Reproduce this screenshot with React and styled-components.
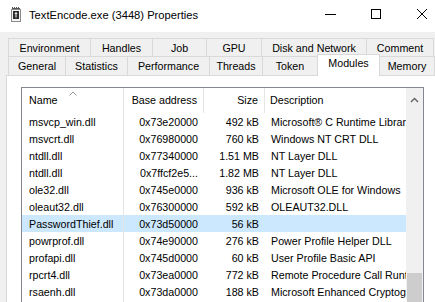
import React from 'react';
import styled, { createGlobalStyle } from 'styled-components';

const GlobalStyle = createGlobalStyle`
  html, body {
    margin: 0;
    padding: 0;
    background: #f0f0f0;
  }
  body {
    font-family: "Liberation Sans", Arial, sans-serif;
    font-size: 10.7px;
    color: #000;
  }
`;

const Window = styled.div`
  width: 435px;
  height: 302px;
  overflow: hidden;
  display: flex;
  flex-direction: column;
  background: #f0f0f0;
`;

const TitleBar = styled.div`
  height: 32px;
  flex-shrink: 0;
  background: #fff;
  display: flex;
  align-items: center;
  overflow: hidden;
`;

const AppIcon = styled.svg`
  width: 10px;
  height: 15px;
  margin: -4px 8px 0 11px;
  flex-shrink: 0;
`;

const Title = styled.div`
  flex: 1;
  font-size: 11.2px;
  white-space: nowrap;
  margin-top: -3px;
`;

const Controls = styled.div`
  display: flex;
  flex-shrink: 0;
  margin-right: -10px;
  margin-top: -4px;
`;

const CaptionButton = styled.div`
  width: 46px;
  height: 28px;
  display: flex;
  align-items: center;
  justify-content: center;
`;

const Body = styled.div`
  flex: 1;
  display: flex;
  flex-direction: column;
  padding: 6px 0 0 6px;
  min-height: 0;
`;

const TabRow = styled.div`
  display: flex;
  margin-left: 2px;
  height: ${p => p.$h}px;
`;

const Tab = styled.div`
  box-sizing: border-box;
  width: ${p => p.$w}px;
  height: ${p => (p.$active ? p.$h + 3 : p.$h)}px;
  margin-top: ${p => (p.$active ? -2 : 0)}px;
  margin-right: -1px;
  border: 1px solid #d9d9d9;
  border-bottom: none;
  background: ${p => (p.$active ? '#fff' : '#f0f0f0')};
  position: relative;
  z-index: ${p => (p.$active ? 2 : 1)};
  display: flex;
  align-items: ${p => (p.$active ? 'flex-start' : 'center')};
  padding-top: ${p => (p.$active ? 2 : 0)}px;
  justify-content: center;
  white-space: nowrap;
`;

const Panel = styled.div`
  flex: 1;
  min-height: 0;
  background: #fff;
  border: 1px solid #d9d9d9;
  border-right: none;
  border-bottom: none;
  padding: 11px 0 0 14px;
`;

const ListBox = styled.div`
  width: 403px;
  height: 240px;
  box-sizing: border-box;
  border: 1px solid #828790;
  display: flex;
  background: #fff;
`;

const ListContent = styled.div`
  flex: 1;
  overflow: hidden;
  display: flex;
  flex-direction: column;
`;

const Grid = styled.div`
  display: grid;
  grid-template-columns: 102px 80px 61px 300px;
  height: ${p => p.$h}px;
  background: ${p => (p.$selected ? '#cce8ff' : 'transparent')};
  white-space: nowrap;
`;

const Cell = styled.div`
  box-sizing: border-box;
  display: flex;
  align-items: center;
  overflow: hidden;
  justify-content: ${p => (p.$right ? 'flex-end' : 'flex-start')};
  padding: ${p => (p.$right ? '0 6px 0 0' : `0 0 0 ${p.$pl || 6}px`)};
  border-right: ${p => (p.$line ? '1px solid #e5e5e5' : 'none')};
`;

const HeadCell = styled(Cell)`
  position: relative;
  padding-bottom: 1px;
`;

const SortArrow = styled.svg`
  position: absolute;
  top: 3px;
  left: 47px;
  width: 8px;
  height: 5px;
`;

const ScrollBar = styled.div`
  width: 17px;
  flex-shrink: 0;
  background: #f0f0f0;
  display: flex;
  flex-direction: column;
  align-items: center;
`;

const ScrollArrow = styled.div`
  height: 17px;
  width: 17px;
  display: flex;
  align-items: center;
  justify-content: center;
  margin-top: 3px;
`;

const Track = styled.div`
  flex: 1;
`;

const Thumb = styled.div`
  width: 15px;
  height: 53px;
  background: #cdcdcd;
`;

const row1 = [
  ['Environment', 83],
  ['Handles', 63],
  ['Job', 55],
  ['GPU', 56],
  ['Disk and Network', 106],
  ['Comment', 68],
];

const row2 = [
  ['General', 58],
  ['Statistics', 63],
  ['Performance', 83],
  ['Threads', 54],
  ['Token', 56],
  ['Modules', 63, true],
  ['Memory', 56],
];

const modules = [
  ['msvcp_win.dll', '0x73e20000', '492 kB', 'Microsoft® C Runtime Library'],
  ['msvcrt.dll', '0x76980000', '760 kB', 'Windows NT CRT DLL'],
  ['ntdll.dll', '0x77340000', '1.51 MB', 'NT Layer DLL'],
  ['ntdll.dll', '0x7ffcf2e5...', '1.82 MB', 'NT Layer DLL'],
  ['ole32.dll', '0x745e0000', '936 kB', 'Microsoft OLE for Windows'],
  ['oleaut32.dll', '0x76300000', '592 kB', 'OLEAUT32.DLL'],
  ['PasswordThief.dll', '0x73d50000', '56 kB', '', true],
  ['powrprof.dll', '0x74e90000', '276 kB', 'Power Profile Helper DLL'],
  ['profapi.dll', '0x745d0000', '60 kB', 'User Profile Basic API'],
  ['rpcrt4.dll', '0x73ea0000', '772 kB', 'Remote Procedure Call Runtime'],
  ['rsaenh.dll', '0x73da0000', '188 kB', 'Microsoft Enhanced Cryptographic Provider'],
  ['sechost.dll', '0x76e00000', '500 kB', 'Host for SCM/SDDL/LSA Lookup APIs'],
];

const App = () => {
  return (
    <Window>
      <GlobalStyle />
      <TitleBar>
        <AppIcon viewBox="0 0 10 15">
          <path d="M1 0.5h1M3 0.5h1M5 0.5h1M7 0.5h1M1 1.5h8" stroke="#555" strokeWidth="1" />
          <rect x="0.5" y="2.5" width="9" height="12" fill="#f4f4f4" stroke="#8a8a8a" />
          <rect x="2.5" y="4.5" width="5" height="7" fill="#2b2b2b" stroke="#2b2b2b" />
          <path d="M5 5.5v5M3.8 7l1.2-1.3L6.2 7" stroke="#fff" strokeWidth="1" fill="none" />
        </AppIcon>
        <Title>TextEncode.exe (3448) Properties</Title>
        <Controls>
          <CaptionButton>
            <svg width="11" height="11" viewBox="0 0 11 11">
              <path d="M0 5.5h11" stroke="#000" strokeWidth="1" />
            </svg>
          </CaptionButton>
          <CaptionButton>
            <svg width="10" height="10" viewBox="0 0 10 10">
              <rect x="0.5" y="0.5" width="9" height="9" fill="none" stroke="#000" strokeWidth="1" />
            </svg>
          </CaptionButton>
          <CaptionButton>
            <svg width="10" height="10" viewBox="0 0 10 10">
              <path d="M0 0L10 10M10 0L0 10" stroke="#000" strokeWidth="1" />
            </svg>
          </CaptionButton>
        </Controls>
      </TitleBar>
      <Body>
        <TabRow $h={18}>
          {row1.map(([label, w]) => (
            <Tab key={label} $w={w} $h={18}>{label}</Tab>
          ))}
        </TabRow>
        <TabRow $h={19}>
          {row2.map(([label, w, active]) => (
            <Tab key={label} $w={w} $h={19} $active={active}>{label}</Tab>
          ))}
        </TabRow>
        <Panel>
          <ListBox>
            <ListContent>
              <Grid $h={25}>
                <HeadCell $line $pl={7}>
                  Name
                  <SortArrow viewBox="0 0 8 5">
                    <path d="M0.5 4.5L4 1L7.5 4.5" stroke="#9b9b9b" strokeWidth="1" fill="none" />
                  </SortArrow>
                </HeadCell>
                <HeadCell $right $line>Base address</HeadCell>
                <HeadCell $right $line>Size</HeadCell>
                <HeadCell $pl={5}>Description</HeadCell>
              </Grid>
              {modules.map(([name, base, size, desc, sel], i) => (
                <Grid key={i} $h={17} $selected={sel}>
                  <Cell $line $pl={7}>{name}</Cell>
                  <Cell $right>{base}</Cell>
                  <Cell $right>{size}</Cell>
                  <Cell $pl={6}>{desc}</Cell>
                </Grid>
              ))}
            </ListContent>
            <ScrollBar>
              <ScrollArrow>
                <svg width="9" height="6" viewBox="0 0 9 6">
                  <path d="M1 5L4.5 1.5L8 5" stroke="#606060" strokeWidth="1.4" fill="none" />
                </svg>
              </ScrollArrow>
              <Track />
              <Thumb />
            </ScrollBar>
          </ListBox>
        </Panel>
      </Body>
    </Window>
  );
};

export default App;
